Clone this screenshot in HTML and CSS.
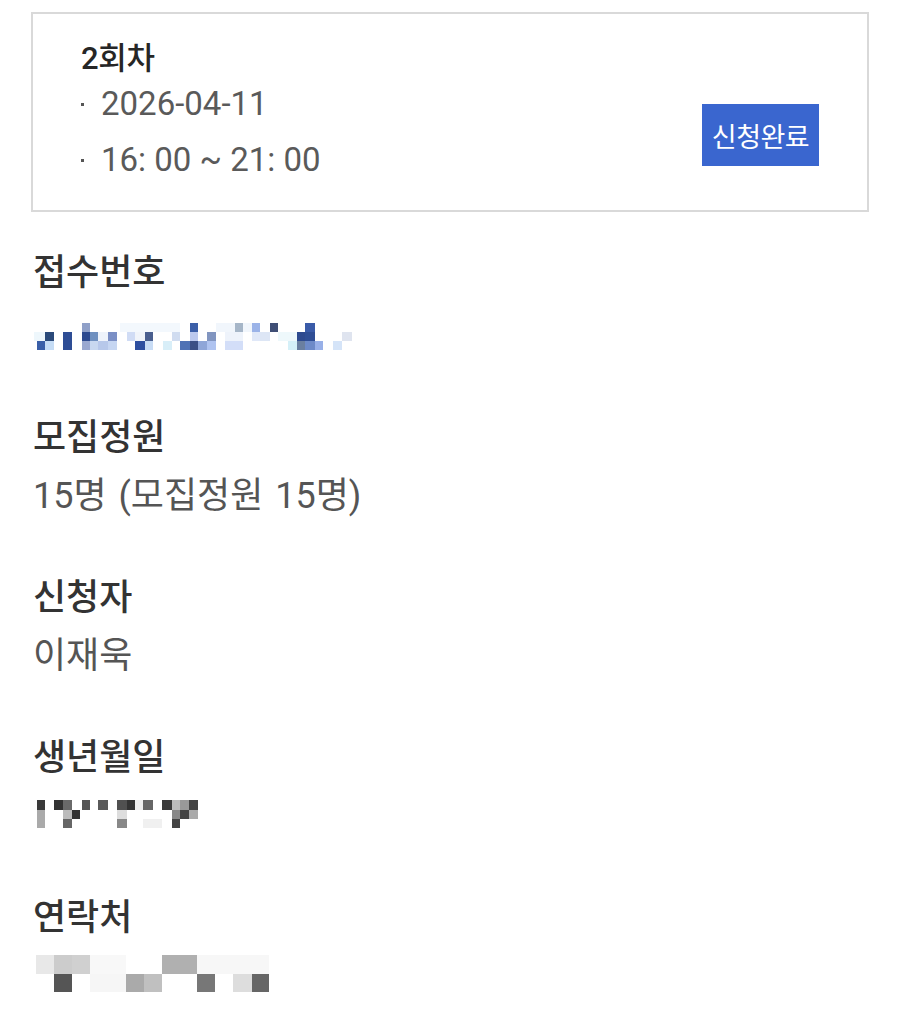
FILE: index.html
```html
<!DOCTYPE html>
<html lang="ko">
<head>
<meta charset="utf-8">
<link rel="stylesheet" href="styles.css">
</head>
<body>
<div class="card">
  <div class="session">
    <div class="session-title">2회차</div>
    <div class="session-line date"><span class="dot"></span>2026-04-11</div>
    <div class="session-line time"><span class="dot"></span>16: 00 ~ 21: 00</div>
  </div>
  <div class="badge">신청완료</div>
</div>

<div class="field first">
  <div class="label">접수번호</div>
  <div class="value mosaic-row tall">
    <svg class="mosaic" width="330" height="45" viewBox="33 308 330 45">
      <rect x="34" y="332" width="20" height="9" fill="#eef7fc"/>
      <rect x="120" y="323" width="60" height="9" fill="#f3f8fd"/>
      <rect x="216" y="323" width="40" height="9" fill="#f1f6fc"/>
      <rect x="278" y="332" width="20" height="9" fill="#eef8fb"/>
      <rect x="37" y="341" width="8" height="9" fill="#3a5fa8"/>
      <rect x="45" y="332" width="9" height="9" fill="#2b4a7a"/>
      <rect x="45" y="341" width="9" height="9" fill="#c5dcf5"/>
      <rect x="63" y="332" width="9" height="18" fill="#2e4d95"/>
      <rect x="82" y="323" width="8" height="9" fill="#8fa0c8"/>
      <rect x="82" y="332" width="8" height="9" fill="#2d4a8f"/>
      <rect x="82" y="341" width="8" height="9" fill="#9aa8d0"/>
      <rect x="90" y="332" width="8" height="9" fill="#6f90c0"/>
      <rect x="90" y="341" width="8" height="9" fill="#c8d8f0"/>
      <rect x="98" y="332" width="10" height="9" fill="#eef3fb"/>
      <rect x="98" y="341" width="10" height="9" fill="#b7c8ea"/>
      <rect x="108" y="332" width="9" height="9" fill="#7b8fc5"/>
      <rect x="108" y="341" width="9" height="9" fill="#c6d6f2"/>
      <rect x="127" y="332" width="8" height="9" fill="#d0dcf5"/>
      <rect x="135" y="332" width="10" height="9" fill="#f0f4fa"/>
      <rect x="135" y="341" width="10" height="9" fill="#2e4fa0"/>
      <rect x="145" y="332" width="8" height="9" fill="#4a5f8f"/>
      <rect x="145" y="341" width="8" height="9" fill="#c8dcf5"/>
      <rect x="163" y="341" width="9" height="9" fill="#d8eef8"/>
      <rect x="172" y="332" width="8" height="9" fill="#d0dcf0"/>
      <rect x="180" y="341" width="10" height="9" fill="#4f72b5"/>
      <rect x="190" y="323" width="8" height="9" fill="#3c5fa8"/>
      <rect x="190" y="332" width="8" height="9" fill="#bcc9ee"/>
      <rect x="190" y="341" width="8" height="9" fill="#3a4f85"/>
      <rect x="198" y="341" width="9" height="9" fill="#8fa6d8"/>
      <rect x="207" y="332" width="9" height="9" fill="#8195c0"/>
      <rect x="207" y="341" width="9" height="9" fill="#afc3f0"/>
      <rect x="225" y="332" width="18" height="9" fill="#eef3fb"/>
      <rect x="225" y="341" width="18" height="9" fill="#d3def8"/>
      <rect x="235" y="323" width="8" height="9" fill="#a6b6c8"/>
      <rect x="252" y="323" width="8" height="9" fill="#9bb3e8"/>
      <rect x="252" y="332" width="8" height="9" fill="#e0e8f8"/>
      <rect x="260" y="332" width="10" height="9" fill="#dde6f5"/>
      <rect x="270" y="323" width="8" height="9" fill="#3f4e75"/>
      <rect x="288" y="341" width="9" height="9" fill="#d5f0f8"/>
      <rect x="297" y="332" width="8" height="9" fill="#2e4a8f"/>
      <rect x="297" y="341" width="8" height="9" fill="#6a7fa0"/>
      <rect x="305" y="323" width="10" height="9" fill="#3a5ba8"/>
      <rect x="305" y="332" width="10" height="9" fill="#2f4e95"/>
      <rect x="305" y="341" width="10" height="9" fill="#6d8ac8"/>
      <rect x="315" y="341" width="8" height="9" fill="#98b0e8"/>
      <rect x="333" y="341" width="9" height="9" fill="#d5e4f8"/>
      <rect x="342" y="332" width="10" height="9" fill="#dfe4ef"/>
    </svg>
  </div>
</div>

<div class="field text-field">
  <div class="label">모집정원</div>
  <div class="value text">15명 (모집정원 15명)</div>
</div>

<div class="field text-field">
  <div class="label">신청자</div>
  <div class="value text">이재욱</div>
</div>

<div class="field">
  <div class="label">생년월일</div>
  <div class="value mosaic-row">
    <svg class="mosaic" width="170" height="40" viewBox="33 793 170 40">
      <rect x="37" y="800" width="8" height="10" fill="#3a3a3a"/>
      <rect x="37" y="810" width="8" height="18" fill="#aaaaaa"/>
      <rect x="54" y="800" width="9" height="10" fill="#333333"/>
      <rect x="63" y="800" width="9" height="10" fill="#6a6a6a"/>
      <rect x="63" y="810" width="9" height="9" fill="#bbbbbb"/>
      <rect x="63" y="819" width="9" height="9" fill="#666666"/>
      <rect x="72" y="810" width="8" height="9" fill="#333333"/>
      <rect x="82" y="800" width="8" height="10" fill="#555555"/>
      <rect x="98" y="800" width="10" height="10" fill="#5a5a5a"/>
      <rect x="117" y="800" width="10" height="10" fill="#505050"/>
      <rect x="117" y="810" width="10" height="9" fill="#dddddd"/>
      <rect x="117" y="819" width="10" height="9" fill="#888888"/>
      <rect x="127" y="800" width="8" height="10" fill="#333333"/>
      <rect x="135" y="800" width="8" height="10" fill="#eeeeee"/>
      <rect x="143" y="800" width="10" height="10" fill="#666666"/>
      <rect x="143" y="819" width="19" height="9" fill="#f0f0f0"/>
      <rect x="162" y="800" width="10" height="10" fill="#3a3a3a"/>
      <rect x="172" y="800" width="8" height="10" fill="#bbbbbb"/>
      <rect x="172" y="810" width="8" height="9" fill="#888888"/>
      <rect x="172" y="819" width="8" height="9" fill="#444444"/>
      <rect x="180" y="800" width="9" height="10" fill="#999999"/>
      <rect x="180" y="810" width="9" height="9" fill="#444444"/>
      <rect x="189" y="800" width="9" height="10" fill="#444444"/>
      <rect x="189" y="810" width="9" height="9" fill="#aaaaaa"/>
    </svg>
  </div>
</div>

<div class="field">
  <div class="label">연락처</div>
  <div class="value mosaic-row">
    <svg class="mosaic" width="250" height="40" viewBox="33 951 250 40">
      <rect x="36" y="953" width="18" height="19" fill="#e8e8e8"/>
      <rect x="54" y="953" width="18" height="19" fill="#cccccc"/>
      <rect x="54" y="972" width="18" height="18" fill="#555555"/>
      <rect x="72" y="953" width="18" height="19" fill="#d0d0d0"/>
      <rect x="90" y="953" width="36" height="19" fill="#f8f8f8"/>
      <rect x="90" y="972" width="36" height="18" fill="#f6f6f6"/>
      <rect x="126" y="972" width="18" height="18" fill="#aaaaaa"/>
      <rect x="144" y="972" width="18" height="18" fill="#c0c0c0"/>
      <rect x="162" y="953" width="35" height="19" fill="#b0b0b0"/>
      <rect x="197" y="953" width="72" height="19" fill="#f7f7f7"/>
      <rect x="197" y="972" width="18" height="18" fill="#777777"/>
      <rect x="233" y="972" width="19" height="18" fill="#dddddd"/>
      <rect x="252" y="972" width="17" height="18" fill="#666666"/>
    </svg>
  </div>
</div>
</body>
</html>
```

FILE: styles.css
```css
html, body {
  margin: 0;
  padding: 0;
  background: #ffffff;
}

body {
  font-family: Roboto, "Noto Sans CJK KR", "Noto Sans", sans-serif;
  color: #333333;
}

.card {
  box-sizing: border-box;
  width: 838px;
  height: 200px;
  margin: 12px 0 0 31px;
  border: 2px solid #d9d9d9;
  padding: 25px 48px 0 48px;
  display: flex;
  justify-content: space-between;
  align-items: flex-start;
}

.session-title {
  font-size: 31px;
  line-height: 40px;
  font-weight: 500;
  color: #262626;
  letter-spacing: -0.3px;
}

.session-line {
  font-size: 33px;
  line-height: 40px;
  color: #5a5a5a;
  display: flex;
  align-items: center;
}

.session-line.date {
  margin-top: 5px;
}

.session-line.time {
  margin-top: 16px;
}

.dot {
  width: 3px;
  height: 3px;
  margin-left: 0;
  margin-right: 17px;
  background: #555555;
  flex: none;
}

.badge {
  margin-top: 65px;
  width: 117px;
  height: 62px;
  background: #3a66cf;
  color: #ffffff;
  font-family: "Noto Sans CJK KR", sans-serif;
  font-size: 27px;
  font-weight: 400;
  display: flex;
  align-items: center;
  justify-content: center;
  letter-spacing: -0.5px;
}

.field {
  margin-left: 33px;
  margin-bottom: 61px;
}

.field.first {
  margin-top: 37px;
}

.field.text-field {
  margin-bottom: 55px;
}

.label {
  font-family: "Noto Sans CJK KR", sans-serif;
  font-size: 36px;
  line-height: 40px;
  font-weight: 500;
  color: #333333;
}

.value {
  margin-top: 19px;
  font-size: 36px;
  line-height: 40px;
  color: #555555;
}

.value.text {
  line-height: 46px;
  word-spacing: 3px;
}

.mosaic-row {
  height: 40px;
}

.mosaic-row.tall {
  height: 45px;
}

.mosaic {
  display: block;
}
```
